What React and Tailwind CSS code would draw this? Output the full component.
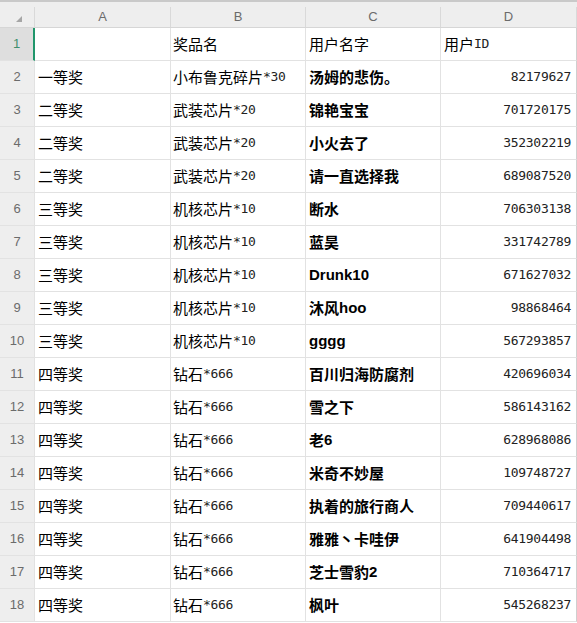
import React from "react"

const rows = [
  ["", "奖品名", "用户名字", "用户ID"],
  ["一等奖", "小布鲁克碎片*30", "汤姆的悲伤。", "82179627"],
  ["二等奖", "武装芯片*20", "锦艳宝宝", "701720175"],
  ["二等奖", "武装芯片*20", "小火去了", "352302219"],
  ["二等奖", "武装芯片*20", "请一直选择我", "689087520"],
  ["三等奖", "机核芯片*10", "断水", "706303138"],
  ["三等奖", "机核芯片*10", "蓝昊", "331742789"],
  ["三等奖", "机核芯片*10", "Drunk10", "671627032"],
  ["三等奖", "机核芯片*10", "沐风hoo", "98868464"],
  ["三等奖", "机核芯片*10", "gggg", "567293857"],
  ["四等奖", "钻石*666", "百川归海防腐剂", "420696034"],
  ["四等奖", "钻石*666", "雪之下", "586143162"],
  ["四等奖", "钻石*666", "老6", "628968086"],
  ["四等奖", "钻石*666", "米奇不妙屋", "109748727"],
  ["四等奖", "钻石*666", "执着的旅行商人", "709440617"],
  ["四等奖", "钻石*666", "雅雅丶卡哇伊", "641904498"],
  ["四等奖", "钻石*666", "芝士雪豹2", "710364717"],
  ["四等奖", "钻石*666", "枫叶", "545268237"],
]

const cjk = '"Noto Sans CJK SC", sans-serif'

// ascii runs in a half-width mono face, like the sheet's default font
const Mixed = ({ text }) => {
  const parts = text.match(/[\x00-\x7f]+|[^\x00-\x7f]+/g) || []
  return parts.map((p, i) =>
    /^[\x00-\x7f]+$/.test(p) ? (
      <span key={i} className="font-['DejaVu_Sans_Mono',monospace] text-[13px] tracking-[-0.3px] text-[#222]">
        {p}
      </span>
    ) : (
      <span key={i}>{p}</span>
    )
  )
}

const Bold = ({ text }) => {
  const parts = text.match(/[\x00-\x7f]+|[^\x00-\x7f]+/g) || []
  return parts.map((p, i) =>
    /^[\x00-\x7f]+$/.test(p) ? (
      <span key={i} className="font-['Liberation_Sans',sans-serif] font-bold">
        {p}
      </span>
    ) : (
      <span key={i} className="font-bold">{p}</span>
    )
  )
}

const cell = "border-r border-b border-[#e2e2e2] flex items-center h-[33px] overflow-hidden whitespace-nowrap"

export default function App() {
  return (
    <div className="w-[577px] h-[623px] bg-white overflow-hidden text-[15px] text-black" style={{ fontFamily: cjk }}>
      <div className="h-[2px] bg-[#c9c9c9]" />
      <div className="h-[5px] bg-[#eeeeee]" />
      <div className="grid grid-cols-[35px_136px_135px_135px_1fr] h-[21px] bg-[#eeeeee] border-b border-[#d6d6d6]">
        <div className="relative border-r border-[#d9d9d9]">
          <svg className="absolute left-[16px] top-[9px]" width="6" height="6" viewBox="0 0 6 6">
            <polygon points="6,0 6,6 0,6" fill="#a6a6a6" />
          </svg>
        </div>
        {["A", "B", "C", "D"].map((c) => (
          <div key={c} className="flex items-center justify-center border-r border-[#d9d9d9]">
            <span className="text-[13px] text-[#6b6b6b] font-['Liberation_Sans',sans-serif]">{c}</span>
          </div>
        ))}
      </div>
      <div className="grid grid-cols-[35px_136px_135px_135px_1fr]">
        {rows.map((r, i) => (
          <React.Fragment key={i}>
            <div
              className={`${cell} justify-center text-[13px] font-['Liberation_Sans',sans-serif] relative ${
                i === 0 ? "bg-[#dedede] text-[#3f8f6e] border-r-[#20966b] border-r-2" : "bg-[#eeeeee] text-[#6b6b6b] border-[#d9d9d9]"
              }`}
            >
              {i + 1}
            </div>
            <div className={`${cell} pl-[3px]`}>
              <Mixed text={r[0]} />
            </div>
            <div className={`${cell} pl-[2px]`}>
              <Mixed text={r[1]} />
            </div>
            <div className={`${cell} pl-[3px]`}>
              {i === 0 ? <Mixed text={r[2]} /> : <Bold text={r[2]} />}
            </div>
            <div className={`${cell} ${i === 0 ? "pl-[3px]" : "justify-end pr-[5px]"} border-r-[#cfcfcf]`}>
              <Mixed text={r[3]} />
            </div>
          </React.Fragment>
        ))}
      </div>
    </div>
  )
}
